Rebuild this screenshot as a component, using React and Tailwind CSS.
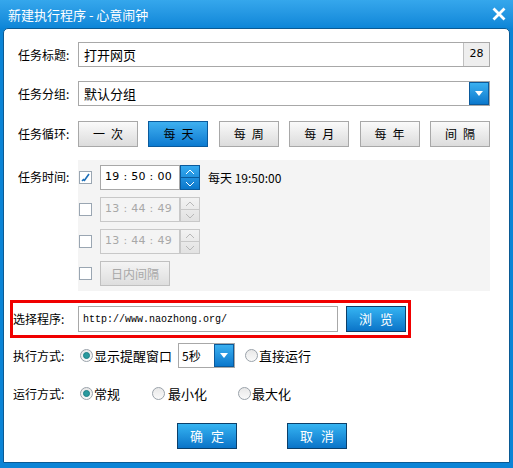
import React from "react";

const F = { fontFamily: '"Noto Sans CJK SC", "Liberation Sans", sans-serif' };

function Arrow() {
  return (
    <div className="w-[20px] h-full flex items-center justify-center border border-[#0a5a9c] bg-gradient-to-b from-[#3ab0f0] to-[#0a78cc]">
      <svg width="8" height="5" viewBox="0 0 8 5"><path d="M0 0H8L4 5Z" fill="#fff" /></svg>
    </div>
  );
}

function Btn({ children, active }) {
  return (
    <div
      className={
        "w-[60px] h-[26px] flex items-center justify-center text-[12px] tracking-[6px] pl-[6px] border " +
        (active
          ? "border-[#0a5a9c] bg-gradient-to-b from-[#3eb0f0] to-[#0a7ad0] text-black"
          : "border-[#a8a8a8] bg-gradient-to-b from-[#fafafa] to-[#dcdcdc] text-black")
      }
    >
      {children}
    </div>
  );
}

function BlueBtn({ children }) {
  return (
    <div className="w-[60px] h-[26px] flex items-center justify-center text-[13px] tracking-[8px] pl-[8px] text-white border border-[#0b3f6a] bg-gradient-to-b from-[#35b4f2] to-[#0a74c8]">
      {children}
    </div>
  );
}

function Check({ checked }) {
  return (
    <div className="w-[13px] h-[13px] border border-[#9aa6b2] bg-white flex items-center justify-center">
      {checked && (
        <svg width="11" height="11" viewBox="0 0 11 11">
          <path d="M2 9 L4 7 M4 9 L9 2" stroke="#1d6fb8" strokeWidth="1.6" fill="none" />
        </svg>
      )}
    </div>
  );
}

function Spin({ disabled }) {
  const col = disabled ? "#b8b8b8" : "#ffffff";
  return (
    <div
      className={
        "w-[20px] h-full flex flex-col border " +
        (disabled ? "border-[#c8c8c8] bg-gradient-to-b from-[#f2f2f2] to-[#e2e2e2]" : "border-[#0a5a9c] bg-gradient-to-b from-[#35aaf0] to-[#0a78cc]")
      }
    >
      <div className={"flex-1 flex items-center justify-center border-b " + (disabled ? "border-[#c8c8c8]" : "border-[#0a5a9c]")}>
        <svg width="10" height="6" viewBox="0 0 10 6"><path d="M1 5 L5 1 L9 5" stroke={col} strokeWidth="1" fill="none" /></svg>
      </div>
      <div className="flex-1 flex items-center justify-center">
        <svg width="10" height="6" viewBox="0 0 10 6"><path d="M1 1 L5 5 L9 1" stroke={col} strokeWidth="1" fill="none" /></svg>
      </div>
    </div>
  );
}

function TimeRow({ time, checked, disabled, extra }) {
  return (
    <div className="flex items-center h-[25px]">
      <div className="w-[22px] pl-[1px]">
        <Check checked={checked} />
      </div>
      <div className={"w-[80px] h-full border flex items-center pl-[4px] text-[12px] " + (disabled ? "border-[#c8c8c8] bg-[#f4f4f4] text-[#a8a8a8]" : "border-[#a8a8a8] bg-white text-black")} style={{ fontFamily: '"DejaVu Sans", sans-serif', fontSize: 11, letterSpacing: "0.3px" }}>
        <span className="whitespace-pre">{time}</span>
      </div>
      <Spin disabled={disabled} />
      {extra && <span className="ml-[8px] text-[12px]" style={{ fontFamily: '"Noto Sans CJK SC", "DejaVu Sans", sans-serif' }}>{extra}</span>}
    </div>
  );
}

function Radio({ checked }) {
  return (
    <div className="w-[13px] h-[13px] rounded-full border border-[#9aa2aa] bg-gradient-to-b from-[#e8e8e8] to-[#fafafa] flex items-center justify-center">
      {checked && <div className="w-[7px] h-[7px] rounded-full bg-[#2a9a9e] border border-[#1b7f86]" />}
    </div>
  );
}

export default function App() {
  return (
    <div className="w-[513px] h-[468px] bg-[#0b84d6] flex flex-col overflow-hidden text-black" style={F}>
      <div className="h-[28px] flex items-center justify-between bg-gradient-to-b from-[#35a7ec] to-[#0c86d8] pl-[8px] pr-[7px]">
        <span className="text-white text-[13px] leading-none">新建执行程序 - 心意闹钟</span>
        <svg width="14" height="14" viewBox="0 0 14 14">
          <path d="M1.5 1.5 L12.5 12.5 M12.5 1.5 L1.5 12.5" stroke="#fff" strokeWidth="2.8" />
        </svg>
      </div>
      <div className="flex-1 mx-[3px] mb-[5px] bg-white rounded-t-[5px] border border-[#0a5a94] pl-[6px] pt-[13px] text-[12px]">
        {/* Row 1 */}
        <div className="flex items-center h-[25px] pl-[8px]">
          <span className="w-[60px] text-[12px]">任务标题:</span>
          <div className="w-[412px] h-full border border-[#a8a8a8] flex">
            <div className="flex-1 flex items-center pl-[5px] text-[13px]">打开网页</div>
            <div className="w-[26px] border-l border-[#c0c0c0] bg-[#eeeeee] flex items-center justify-center text-[11px]" style={{ fontFamily: '"DejaVu Sans", sans-serif' }}>28</div>
          </div>
        </div>
        {/* Row 2 */}
        <div className="flex items-center h-[25px] pl-[8px] mt-[14px]">
          <span className="w-[60px]">任务分组:</span>
          <div className="w-[412px] h-full border border-[#a8a8a8] flex">
            <div className="flex-1 flex items-center pl-[5px] text-[13px]">默认分组</div>
            <Arrow />
          </div>
        </div>
        {/* Row 3 */}
        <div className="flex items-center h-[26px] pl-[8px] mt-[15px]">
          <span className="w-[60px]">任务循环:</span>
          <div className="w-[412px] flex justify-between">
            <Btn>一次</Btn>
            <Btn active>每天</Btn>
            <Btn>每周</Btn>
            <Btn>每月</Btn>
            <Btn>每年</Btn>
            <Btn>间隔</Btn>
          </div>
        </div>
        {/* Panel */}
        <div className="flex pl-[8px] mt-[13px]">
          <span className="w-[60px] pt-[8px]">任务时间:</span>
          <div className="w-[412px] h-[131px] bg-[#f4f4f4] pt-[5px] flex flex-col gap-[7px]">
            <TimeRow time="19 : 50 : 00" checked extra="每天 19:50:00" />
            <TimeRow time="13 : 44 : 49" disabled />
            <TimeRow time="13 : 44 : 49" disabled />
            <div className="flex items-center h-[25px]">
              <div className="w-[22px] pl-[1px]">
                <Check />
              </div>
              <div className="w-[70px] h-full border border-[#c0c0c0] bg-gradient-to-b from-[#f4f4f4] to-[#dedede] flex items-center justify-center text-[12px] text-[#a8a8a8]">
                日内间隔
              </div>
            </div>
          </div>
        </div>
        {/* Red box */}
        <div className="w-[401px] h-[38px] border-[3px] border-[#f00000] mt-[9px] flex items-center">
          <span className="w-[65px]">选择程序:</span>
          <div className="w-[260px] h-[26px] border border-[#a8a8a8] flex items-center pl-[4px] text-[10px]" style={{ fontFamily: '"Liberation Mono", monospace' }}>
            http://www.naozhong.org/
          </div>
          <div className="ml-[8px]">
            <BlueBtn>浏览</BlueBtn>
          </div>
        </div>
        {/* Exec row */}
        <div className="flex items-center h-[25px] pl-[3px] mt-[5px]">
          <span className="w-[67px]">执行方式:</span>
          <Radio checked />
          <span className="ml-[1px] text-[13px]">显示提醒窗口</span>
          <div className="ml-[6px] w-[57px] h-full border border-[#a8a8a8] flex">
            <div className="flex-1 flex items-center pl-[3px] text-[12px]">5秒</div>
            <Arrow />
          </div>
          <div className="ml-[10px]">
            <Radio />
          </div>
          <span className="ml-[1px] text-[13px]">直接运行</span>
        </div>
        {/* Run row */}
        <div className="flex items-center h-[25px] pl-[3px] mt-[13px]">
          <span className="w-[67px]">运行方式:</span>
          <Radio checked />
          <span className="ml-[1px] w-[58px] text-[13px]">常规</span>
          <Radio />
          <span className="ml-[3px] w-[70px] text-[13px]">最小化</span>
          <Radio />
          <span className="ml-[1px] text-[13px]">最大化</span>
        </div>
        {/* Buttons */}
        <div className="flex mt-[17px] pl-[167px] gap-[50px]">
          <BlueBtn>确定</BlueBtn>
          <BlueBtn>取消</BlueBtn>
        </div>
      </div>
    </div>
  );
}
